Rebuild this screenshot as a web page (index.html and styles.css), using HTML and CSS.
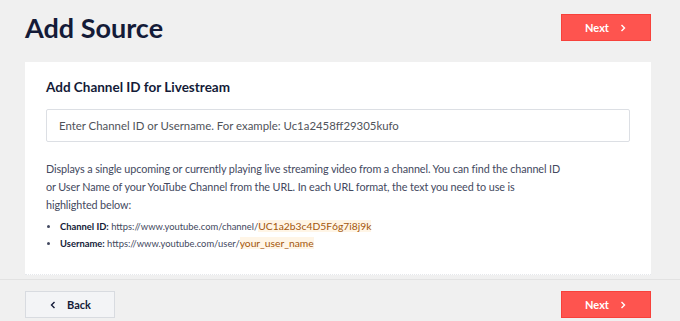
FILE: index.html
```
<!DOCTYPE html>
<html>
<head>
<meta charset="utf-8">
<link rel="stylesheet" href="styles.css">
</head>
<body>
<div class="page">
  <div class="top">
    <h1 class="title">Add Source</h1>
    <button class="btn btn-next">Next <svg class="chev" width="8" height="8" viewBox="0 0 8 8"><path d="M2.5 1 L5.5 4 L2.5 7" fill="none" stroke="#fff" stroke-width="1.4"/></svg></button>
  </div>
  <div class="card">
    <h2 class="card-title">Add Channel ID for Livestream</h2>
    <div class="input">Enter Channel ID or Username. For example: Uc1a2458ff29305kufo</div>
    <p class="desc">Displays a single upcoming or currently playing live streaming video from a channel. You can find the channel ID or User Name of your YouTube Channel from the URL. In each URL format, the text you need to use is highlighted below:</p>
    <ul class="list">
      <li><b>Channel ID:</b> https://www.youtube.com/channel/<span class="hl">UC1a2b3c4D5F6g7i8j9k</span></li>
      <li><b>Username:</b> https://www.youtube.com/user/<span class="hl">your_user_name</span></li>
    </ul>
  </div>
  <div class="footer">
    <button class="btn btn-back"><svg class="chev" width="8" height="8" viewBox="0 0 8 8"><path d="M5.5 1 L2.5 4 L5.5 7" fill="none" stroke="#141b38" stroke-width="1.4"/></svg> Back</button>
    <button class="btn btn-next">Next <svg class="chev" width="8" height="8" viewBox="0 0 8 8"><path d="M2.5 1 L5.5 4 L2.5 7" fill="none" stroke="#fff" stroke-width="1.4"/></svg></button>
  </div>
</div>
</body>
</html>
```
FILE: styles.css
```
html, body {
  margin: 0;
  padding: 0;
  background: #f0f0f0;
  font-family: "Lato", "Open Sans", sans-serif;
  color: #141b38;
}
.page {
  width: 680px;
  height: 321px;
  overflow: hidden;
}
.top {
  display: flex;
  justify-content: space-between;
  align-items: flex-start;
  padding: 14px 29px 0 25px;
  height: 48px;
  box-sizing: border-box;
}
.title {
  margin: 0;
  font-size: 27px;
  font-weight: 700;
  line-height: 34px;
  margin-top: -3px;
  color: #141b38;
}
.btn {
  width: 90px;
  height: 27px;
  display: flex;
  align-items: center;
  justify-content: center;
  gap: 10px;
  font-family: "Lato", sans-serif;
  font-size: 11px;
  font-weight: 700;
  cursor: pointer;
  box-sizing: border-box;
  padding: 0;
}
.btn-next {
  background: #fe544f;
  color: #fff;
  border: 1px solid #f7413b;
}
.btn-back {
  background: #f3f4f6;
  color: #141b38;
  border: 1px solid #d8dbe0;
}
.card {
  margin: 14px 29px 0 25px;
  background: #fff;
  height: 213px;
  box-sizing: border-box;
  padding: 15px 21px 0 21px;
  border-bottom: 1px dotted #e6e8ec;
}
.card-title {
  margin: 0;
  font-size: 13.5px;
  font-weight: 700;
  line-height: 20px;
}
.input {
  margin-top: 12px;
  height: 33px;
  border: 1px solid #dcdfe4;
  border-radius: 2px;
  box-sizing: border-box;
  padding: 0 12px;
  display: flex;
  align-items: center;
  font-size: 11.4px;
  color: #50535a;
}
.desc {
  margin: 18px 0 0 0;
  max-width: 516px;
  font-size: 10.8px;
  letter-spacing: -0.1px;
  line-height: 18px;
  color: #434960;
}
.list {
  margin: 4px 0 0 0;
  padding: 0 0 0 14px;
  font-size: 9.4px;
  line-height: 17px;
  color: #434960;
}
.list li {
  line-height: 17px;
}
.list b {
  font-weight: 700;
  color: #141b38;
}
.hl {
  background: #fff5e6;
  color: #a3560c;
  font-size: 10.3px;
  line-height: 1;
}
.footer {
  margin-top: 4px;
  border-top: 1px solid #e2e2e2;
  display: flex;
  justify-content: space-between;
  padding: 11px 29px 0 25px;
}
```
